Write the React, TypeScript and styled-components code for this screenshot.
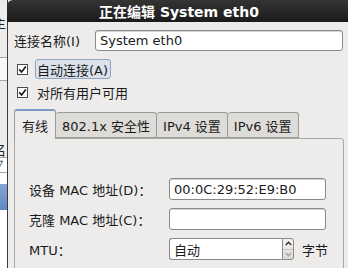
import styled, { createGlobalStyle } from "styled-components";

const GlobalStyle = createGlobalStyle`
  html, body {
    margin: 0;
    padding: 0;
    width: 348px;
    height: 268px;
    overflow: hidden;
    background: #edeceb;
  }
  body {
    font-family: "DejaVu Sans", "Noto Sans CJK SC", sans-serif;
    font-size: 13px;
    color: #1a1a1a;
  }
`;

const Screen = styled.div`
  display: flex;
  width: 348px;
  height: 268px;
  overflow: hidden;
`;

/* the window behind the dialog, mostly hidden */
const BackWindow = styled.div`
  width: 7px;
  flex: none;
  display: flex;
  flex-direction: column;
  background: #edeceb;
  overflow: hidden;
`;

const BackBlock = styled.div<{ $h: number; $bg?: string; $line?: boolean }>`
  height: ${(p) => p.$h}px;
  flex: none;
  background: ${(p) => p.$bg || "transparent"};
  border-bottom: ${(p) => (p.$line ? "1px solid #a9a8a6" : "none")};
  overflow: hidden;
  white-space: nowrap;
  line-height: ${(p) => p.$h}px;
`;

const BackGlyph = styled.span`
  display: inline-block;
  margin-left: -7px;
  font-size: 13px;
  color: #222;
`;

const Dialog = styled.div`
  width: 343px;
  flex: none;
  display: flex;
  flex-direction: column;
  border-left: 1px solid #3a3a3a;
  background: #edeceb;
`;

const TitleBar = styled.div`
  height: 22px;
  flex: none;
  display: flex;
  align-items: center;
  justify-content: center;
  margin-left: -1px;
  border-top-left-radius: 6px;
  background: linear-gradient(#343434, #1b1b1b);
  color: #ffffff;
  font-weight: bold;
  font-size: 14px;
`;

const Body = styled.div`
  display: flex;
  flex-direction: column;
  padding: 8px 7px 0 6px;
`;

const NameRow = styled.div`
  display: flex;
  align-items: center;
  height: 21px;
  padding-right: 1px;
`;

const NameLabel = styled.span`
  width: 81px;
  flex: none;
`;

const Entry = styled.div<{ $w?: number }>`
  box-sizing: border-box;
  height: ${(p) => (p.$w ? 22 : 21)}px;
  ${(p) => (p.$w ? `width: ${p.$w}px; flex: none;` : "flex: 1;")}
  display: flex;
  align-items: center;
  padding: 0 4px;
  background: #ffffff;
  border: 1px solid #8b8a88;
  border-radius: 3px;
  box-shadow: inset 0 1px 0 #d6d5d3;
  white-space: nowrap;
`;

const CheckRow = styled.div<{ $top: number }>`
  display: flex;
  align-items: center;
  height: 20px;
  margin-top: ${(p) => p.$top}px;
  padding-left: 3px;
`;

const Box = styled.span`
  box-sizing: border-box;
  width: 11px;
  height: 11px;
  flex: none;
  display: flex;
  align-items: center;
  justify-content: center;
  background: #ffffff;
  border: 1px solid #4a4a4a;
  margin-top: 1px;
`;

const CheckLabel = styled.span<{ $focus?: boolean }>`
  box-sizing: border-box;
  height: 20px;
  display: flex;
  align-items: center;
  margin-left: 7px;
  padding: 0 2px 0 1px;
  border-radius: 3px;
  border: 1px solid ${(p) => (p.$focus ? "#8fa2bf" : "transparent")};
  background: ${(p) => (p.$focus ? "#dbe2ec" : "transparent")};
`;

const TabStrip = styled.div`
  display: flex;
  align-items: flex-end;
  margin-top: 7px;
  height: 29px;
`;

const Tab = styled.div<{ $active?: boolean }>`
  box-sizing: border-box;
  height: ${(p) => (p.$active ? 30 : 26)}px;
  display: flex;
  align-items: center;
  padding: 0 ${(p) => (p.$active ? 7 : 6)}px;
  margin-bottom: ${(p) => (p.$active ? -1 : 0)}px;
  border: 1px solid #9b9a98;
  border-bottom: ${(p) => (p.$active ? "none" : "1px solid #9b9a98")};
  border-left: ${(p) => (p.$active ? "1px solid #9b9a98" : "none")};
  border-top: ${(p) => (p.$active ? "2px solid #7e9ac4" : "1px solid #9b9a98")};
  border-radius: 3px 3px 0 0;
  background: ${(p) => (p.$active ? "#edeceb" : "#dedcd8")};
  position: relative;
  z-index: ${(p) => (p.$active ? 1 : 0)};
  white-space: nowrap;
`;

const Panel = styled.div`
  flex: 1;
  display: flex;
  flex-direction: column;
  gap: 8px;
  padding: 39px 10px 20px 14px;
  border: 1px solid #a8a7a5;
  border-radius: 0 3px 0 0;
  height: 140px;
`;

const FieldRow = styled.div`
  display: flex;
  align-items: center;
  height: 22px;
  white-space: nowrap;
`;

const FieldLabel = styled.span`
  width: 140px;
  flex: none;
  white-space: nowrap;
`;

const Spin = styled.div`
  display: flex;
  align-items: stretch;
  height: 22px;
  flex: none;
`;

const SpinField = styled.div`
  box-sizing: border-box;
  width: 113px;
  display: flex;
  align-items: center;
  padding: 0 4px;
  background: #ffffff;
  border: 1px solid #8b8a88;
  border-right: none;
  border-radius: 3px 0 0 3px;
`;

const SpinButtons = styled.div`
  box-sizing: border-box;
  width: 12px;
  display: flex;
  flex-direction: column;
  border: 1px solid #8b8a88;
  border-radius: 0 3px 3px 0;
  background: linear-gradient(#f4f3f2, #dddbd8);
`;

const SpinHalf = styled.div<{ $dim?: boolean }>`
  flex: 1;
  display: flex;
  align-items: center;
  justify-content: center;
  color: ${(p) => (p.$dim ? "#a6a5a3" : "#2b2b2b")};
  & + & {
    border-top: 1px solid #c4c3c1;
  }
`;

const Unit = styled.span`
  margin-left: 8px;
  flex: none;
  white-space: nowrap;
`;

const Check = () => (
  <svg width="9" height="9" viewBox="0 0 9 9">
    <path d="M1.2 4.4 L3.6 7 L7.8 1.4" fill="none" stroke="#1a1a1a" strokeWidth="1.7" />
  </svg>
);

const Chevron = ({ down }: { down?: boolean }) => (
  <svg width="7" height="5" viewBox="0 0 7 5">
    <path
      d={down ? "M0.8 1 L3.5 3.8 L6.2 1" : "M0.8 4 L3.5 1.2 L6.2 4"}
      fill="none"
      stroke="currentColor"
      strokeWidth="1.3"
    />
  </svg>
);

export default function App() {
  return (
    <>
      <GlobalStyle />
      <Screen>
        <BackWindow>
          <BackBlock $h={18} />
          <BackBlock $h={12}>
            <BackGlyph>主</BackGlyph>
          </BackBlock>
          <BackBlock $h={27} $line />
          <BackBlock $h={22} $bg="#f7f7f6" $line />
          <BackBlock $h={63} />
          <BackBlock $h={13} $line>
            <BackGlyph>名</BackGlyph>
          </BackBlock>
          <BackBlock $h={14} $bg="#ffffff" $line>
            <BackGlyph>▽</BackGlyph>
          </BackBlock>
          <BackBlock $h={11} $bg="#ffffff" />
          <BackBlock $h={26} $bg="linear-gradient(#86a6d3, #5f87c2)" />
          <BackBlock $h={80} $bg="#ffffff" />
        </BackWindow>
        <Dialog>
          <TitleBar>正在编辑 System eth0</TitleBar>
          <Body>
            <NameRow>
              <NameLabel>连接名称(I)</NameLabel>
              <Entry>System eth0</Entry>
            </NameRow>
            <CheckRow $top={8}>
              <Box>
                <Check />
              </Box>
              <CheckLabel $focus>自动连接(A)</CheckLabel>
            </CheckRow>
            <CheckRow $top={3}>
              <Box>
                <Check />
              </Box>
              <CheckLabel>对所有用户可用</CheckLabel>
            </CheckRow>
            <TabStrip>
              <Tab $active>有线</Tab>
              <Tab>802.1x 安全性</Tab>
              <Tab>IPv4 设置</Tab>
              <Tab>IPv6 设置</Tab>
            </TabStrip>
            <Panel>
              <FieldRow>
                <FieldLabel>设备 MAC 地址(D)：</FieldLabel>
                <Entry $w={157}>00:0C:29:52:E9:B0</Entry>
              </FieldRow>
              <FieldRow>
                <FieldLabel>克隆 MAC 地址(C)：</FieldLabel>
                <Entry $w={157} />
              </FieldRow>
              <FieldRow>
                <FieldLabel>MTU：</FieldLabel>
                <Spin>
                  <SpinField>自动</SpinField>
                  <SpinButtons>
                    <SpinHalf>
                      <Chevron />
                    </SpinHalf>
                    <SpinHalf $dim>
                      <Chevron down />
                    </SpinHalf>
                  </SpinButtons>
                </Spin>
                <Unit>字节</Unit>
              </FieldRow>
            </Panel>
          </Body>
        </Dialog>
      </Screen>
    </>
  );
}
